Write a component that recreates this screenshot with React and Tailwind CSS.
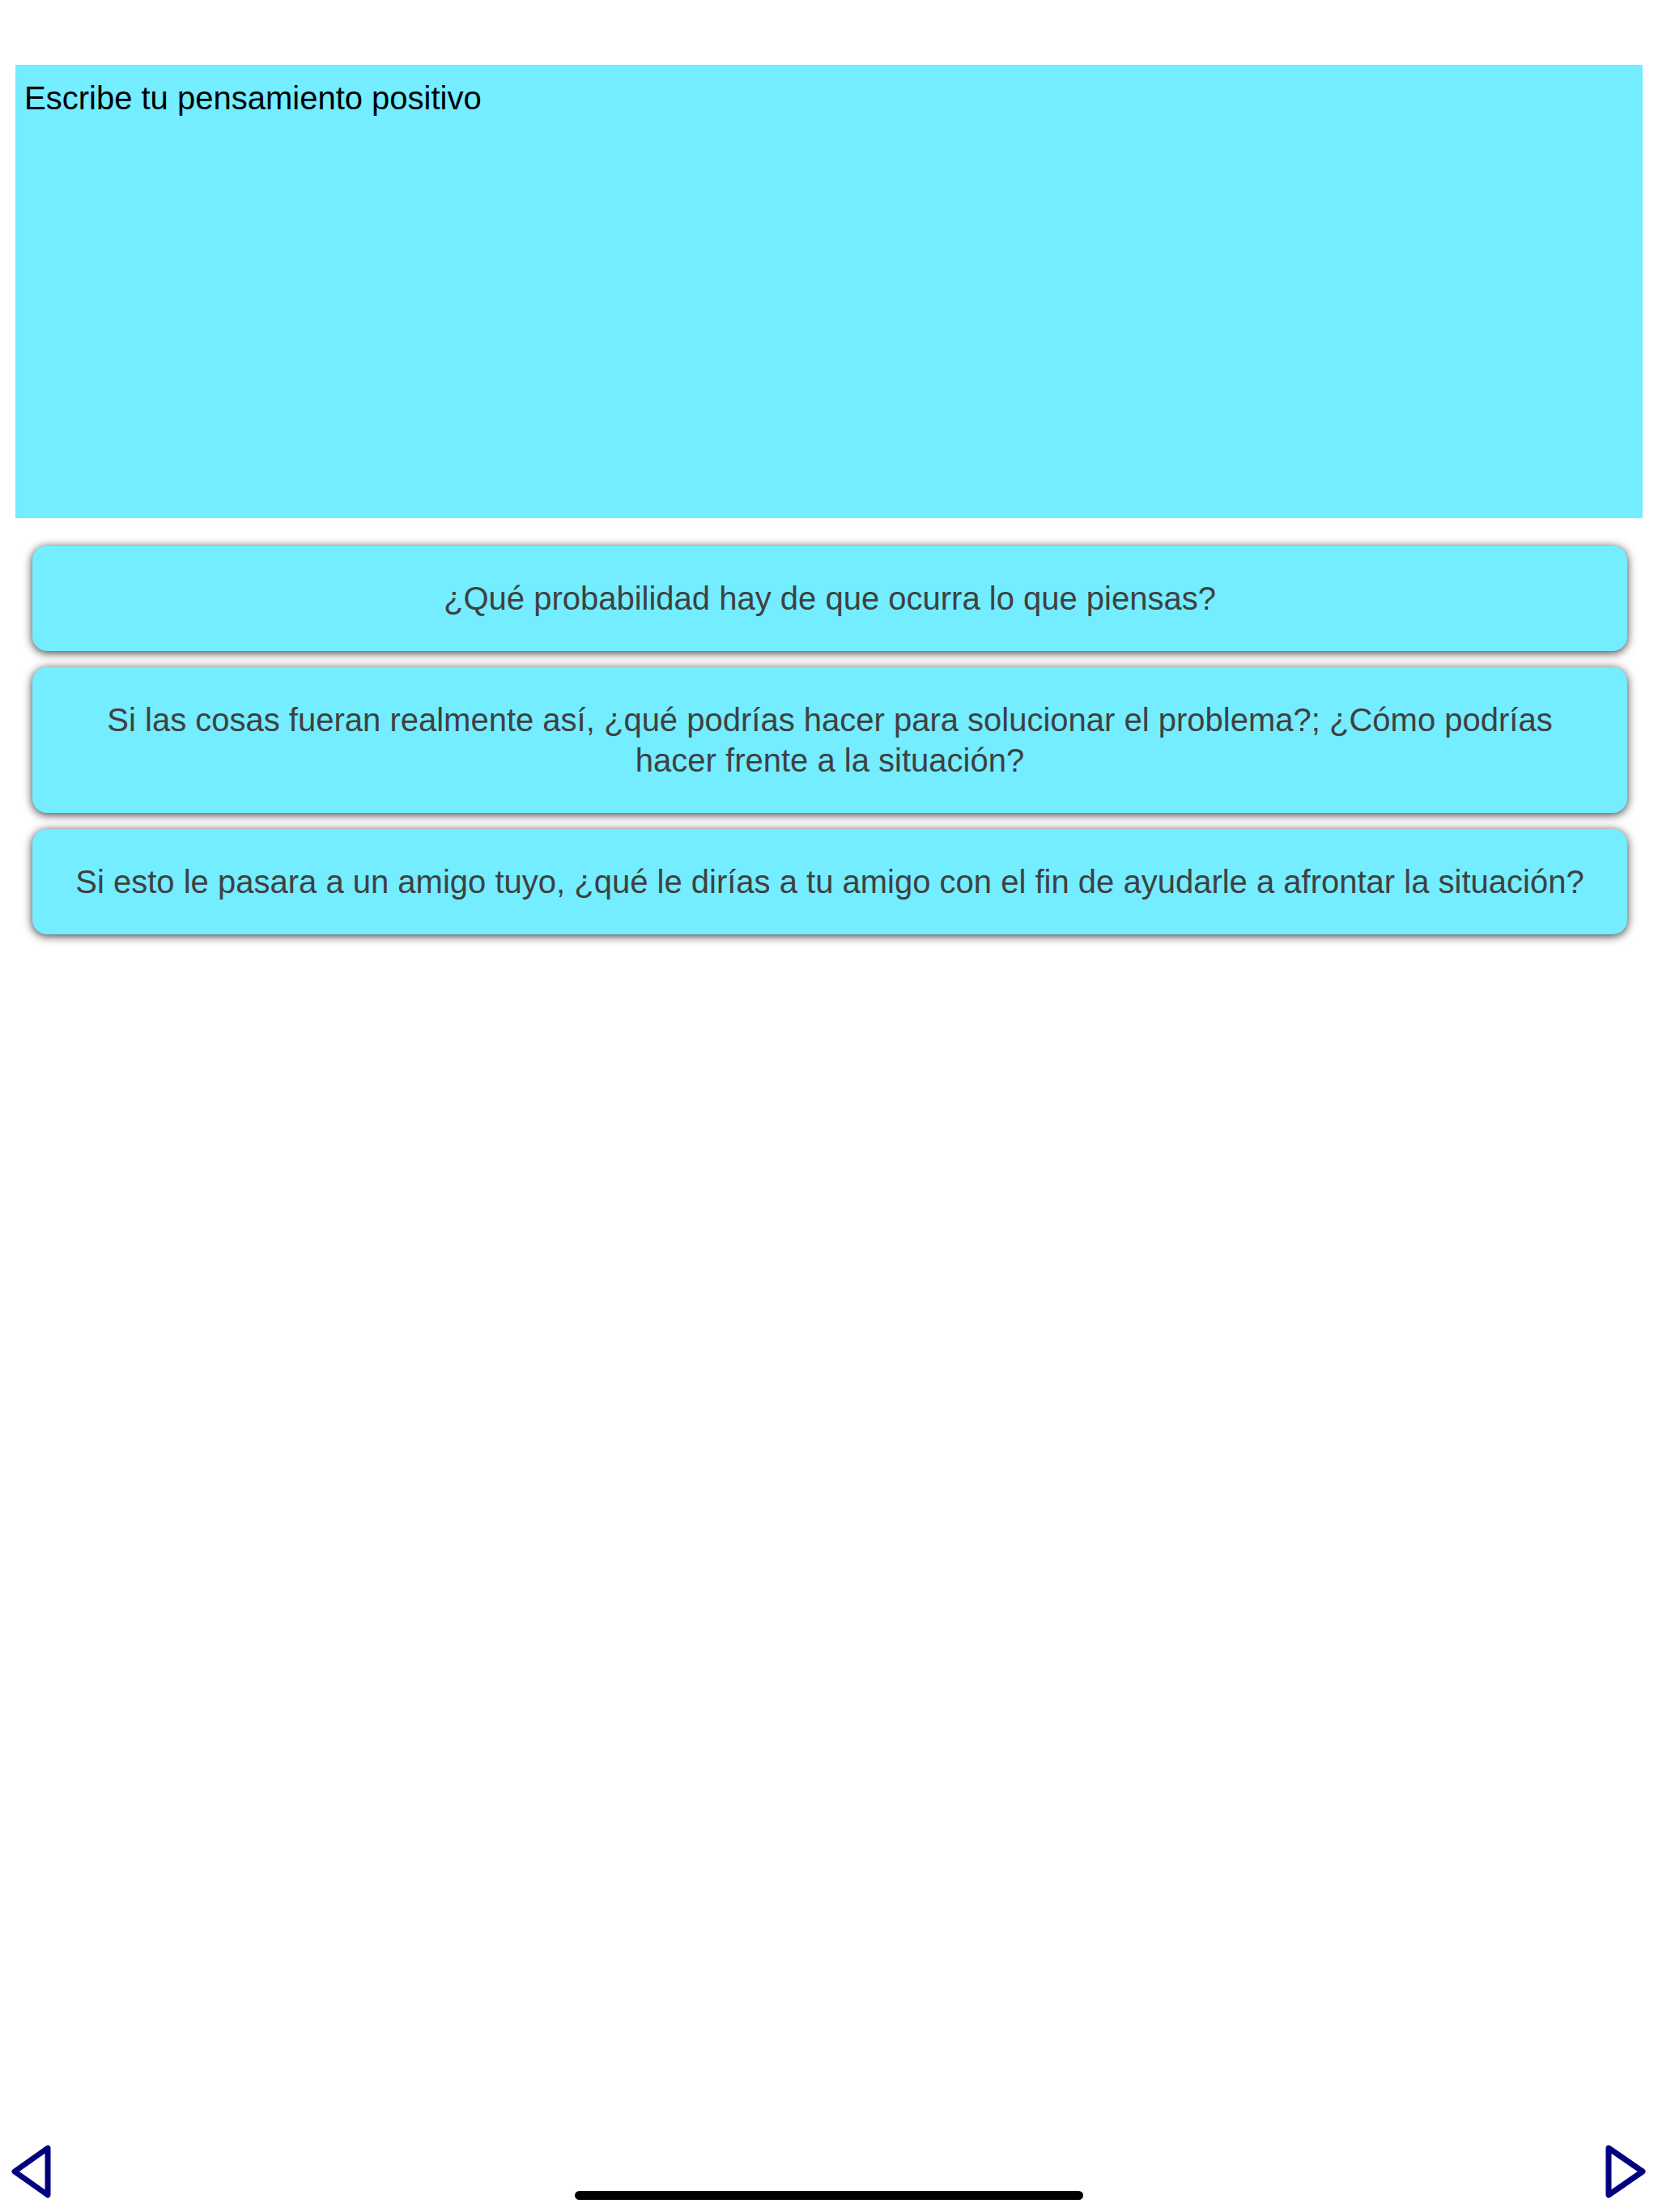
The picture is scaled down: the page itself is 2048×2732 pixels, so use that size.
import React from "react";

const questions = [
  "¿Qué probabilidad hay de que ocurra lo que piensas?",
  "Si las cosas fueran realmente así, ¿qué podrías hacer para solucionar el problema?; ¿Cómo podrías hacer frente a la situación?",
  "Si esto le pasara a un amigo tuyo, ¿qué le dirías a tu amigo con el fin de ayudarle a afrontar la situación?",
];

const App = () => {
  return (
    <div className="relative flex h-[2732px] w-full flex-col bg-white font-['Liberation_Sans',Arial,sans-serif]">
      {/* Text area */}
      <div className="mt-[80px] ml-[19px] mr-[19px] h-[560px] bg-[#73edff] pl-[11px] pt-[18px]">
        <p className="text-[40px] leading-[46px] text-black">
          Escribe tu pensamiento positivo
        </p>
      </div>

      {/* Question cards */}
      <div className="mt-[34px] ml-[40px] mr-[38px] flex flex-col gap-[20px]">
        {questions.map((q, i) => (
          <button
            key={i}
            className="rounded-[18px] bg-[#73edff] px-[46px] py-[40px] text-center text-[40px] leading-[50px] text-[#404040] shadow-[0_2px_12px_rgba(0,0,0,0.8)]"
          >
            {q}
          </button>
        ))}
      </div>

      <div className="flex-1" />

      {/* Navigation arrows */}
      <div className="flex items-end justify-between px-[14px] pb-[17px]">
        <svg width="52" height="66" viewBox="0 0 52 66">
          <polygon
            points="45,4 4,33 45,62"
            fill="none"
            stroke="#00007f"
            strokeWidth="7"
            strokeLinejoin="round"
          />
        </svg>
        <svg width="52" height="66" viewBox="0 0 52 66">
          <polygon
            points="5,4 47,33 5,62"
            fill="none"
            stroke="#00007f"
            strokeWidth="7"
            strokeLinejoin="round"
          />
        </svg>
      </div>

      {/* Home indicator */}
      <div className="absolute bottom-[15px] left-1/2 h-[11px] w-[628px] -translate-x-1/2 rounded-full bg-black" />
    </div>
  );
};

export default App;
